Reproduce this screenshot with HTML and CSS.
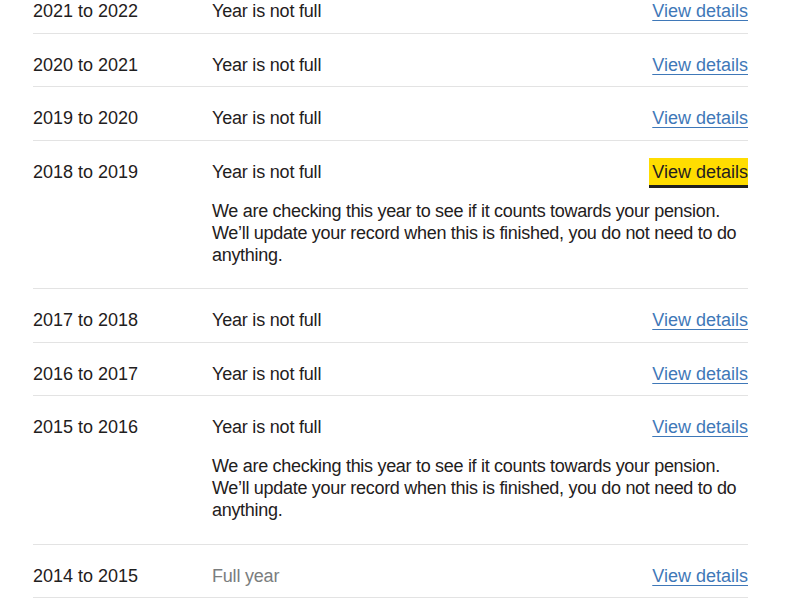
FILE: index.html
```html
<!DOCTYPE html>
<html lang="en">
<head>
    <meta charset="UTF-8">
    <meta name="viewport" content="width=device-width, initial-scale=1.0">
    <title>Your National Insurance record</title>
    <link rel="stylesheet" href="styles.css">
</head>
<body>
    <dl class="record-list">

        <div class="record-row record-row--cut">
            <dt class="record-key">2021 to 2022</dt>
            <dd class="record-value">Year is not full</dd>
            <dd class="record-action"><a href="#" class="record-link">View details</a></dd>
        </div>

        <div class="record-row">
            <dt class="record-key">2020 to 2021</dt>
            <dd class="record-value">Year is not full</dd>
            <dd class="record-action"><a href="#" class="record-link">View details</a></dd>
        </div>

        <div class="record-row">
            <dt class="record-key">2019 to 2020</dt>
            <dd class="record-value">Year is not full</dd>
            <dd class="record-action"><a href="#" class="record-link">View details</a></dd>
        </div>

        <div class="record-row">
            <dt class="record-key">2018 to 2019</dt>
            <dd class="record-value">Year is not full</dd>
            <dd class="record-action"><a href="#" class="record-link focused">View details</a></dd>
            <dd class="record-note">
                We are checking this year to see if it counts towards your pension.
                We’ll update your record when this is finished, you do not need to do anything.
            </dd>
        </div>

        <div class="record-row">
            <dt class="record-key">2017 to 2018</dt>
            <dd class="record-value">Year is not full</dd>
            <dd class="record-action"><a href="#" class="record-link">View details</a></dd>
        </div>

        <div class="record-row">
            <dt class="record-key">2016 to 2017</dt>
            <dd class="record-value">Year is not full</dd>
            <dd class="record-action"><a href="#" class="record-link">View details</a></dd>
        </div>

        <div class="record-row">
            <dt class="record-key">2015 to 2016</dt>
            <dd class="record-value">Year is not full</dd>
            <dd class="record-action"><a href="#" class="record-link">View details</a></dd>
            <dd class="record-note">
                We are checking this year to see if it counts towards your pension.
                We’ll update your record when this is finished, you do not need to do anything.
            </dd>
        </div>

        <div class="record-row">
            <dt class="record-key">2014 to 2015</dt>
            <dd class="record-value record-value--full">Full year</dd>
            <dd class="record-action"><a href="#" class="record-link">View details</a></dd>
        </div>

    </dl>
</body>
</html>
```

FILE: styles.css
```css
body {
    margin: 0;
    background: #fff;
    color: #1f2020;
    font-family: "Liberation Sans", Arial, sans-serif;
    font-size: 18px;
}

.record-list {
    margin: 0;
    padding: 0 52px 0 33px;
}

.record-row {
    display: grid;
    grid-template-columns: 179px 1fr auto;
    padding: 19px 0 8.5px;
    border-bottom: 1px solid #e3e3e3;
}

.record-row--cut {
    margin-top: -20px;
}

.record-key,
.record-value,
.record-action {
    margin: 0;
    line-height: 25px;
}

.record-value {
    letter-spacing: -0.2px;
}

.record-value--full {
    color: #7a7d7e;
}

.record-action {
    text-align: right;
}

.record-link {
    color: #3f78b8;
    text-decoration: underline;
    text-decoration-thickness: 1px;
    text-underline-offset: 3px;
}

.focused {
    color: #1f2020;
    background: #ffdd00;
    text-decoration: none;
    padding: 2px 0 3px 3px;
    box-shadow: 0 -2px #ffdd00, 0 3px #1f2020;
}

.record-note {
    grid-column: 2 / 4;
    margin: 15px 0 14px;
    line-height: 22px;
    letter-spacing: -0.3px;
}
```
